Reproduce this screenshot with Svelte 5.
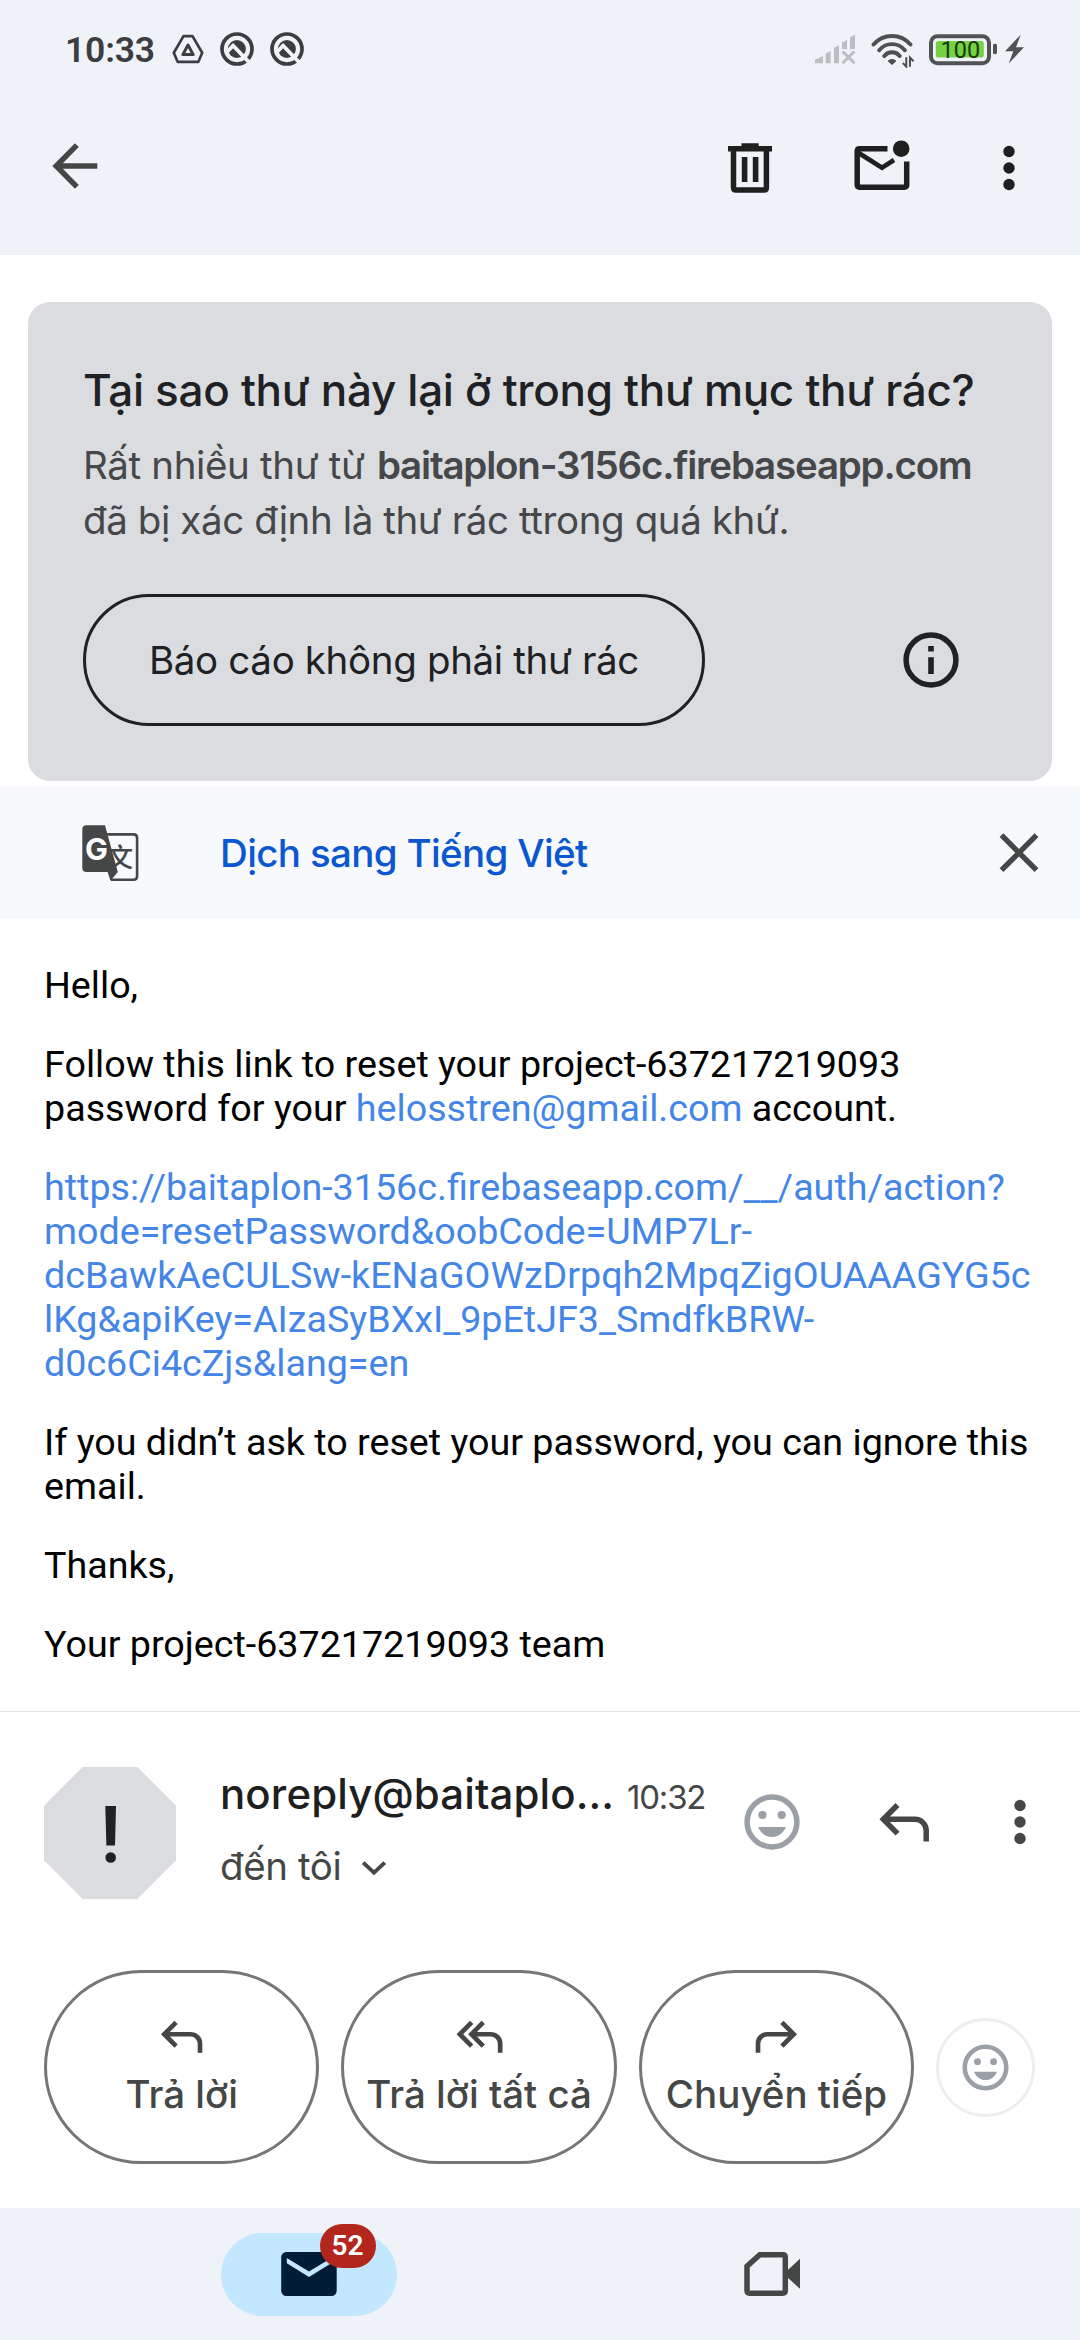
<script>
  const actions = [
    { icon: 'reply', label: 'Trả lời' },
    { icon: 'replyAll', label: 'Trả lời tất cả' },
    { icon: 'forward', label: 'Chuyển tiếp' },
  ];
  const unread = 52;
</script>

{#snippet reply(cls)}
  <svg class={cls} viewBox="0 0 66 66">
    <path class="line" d="M26.5 16 12.3 30.3 26.5 44.6M12.3 30.3H44A11.2 11.2 0 0 1 55.2 41.5V52.4" />
  </svg>
{/snippet}

{#snippet replyAll(cls)}
  <svg class={cls} viewBox="0 0 66 66">
    <path class="line" d="M23.6 16 9.4 30.3 23.6 44.6M37.5 16 23.3 30.3 37.5 44.6M23.3 30.3H46.6A11.2 11.2 0 0 1 57.8 41.5V52.4" />
  </svg>
{/snippet}

{#snippet forward(cls)}
  <svg class={cls} viewBox="0 0 66 66">
    <path class="line" d="M39.5 16 53.7 30.3 39.5 44.6M53.7 30.3H22A11.2 11.2 0 0 0 10.8 41.5V52.4" />
  </svg>
{/snippet}

{#snippet smile(cls)}
  <svg class={cls} viewBox="0 0 66 66">
    <circle class="ring" cx="33" cy="33" r="24.9" />
    <circle class="grey" cx="23.4" cy="26" r="4.1" />
    <circle class="grey" cx="42.7" cy="26" r="4.1" />
    <path class="grey" d="M19.2 38H46.8C44.5 44 39.3 48 33 48S21.5 44 19.2 38Z" />
  </svg>
{/snippet}

{#snippet more(cls)}
  <svg class={cls} viewBox="0 0 66 66">
    <circle cx="33" cy="16.5" r="5.7" />
    <circle cx="33" cy="33" r="5.7" />
    <circle cx="33" cy="49.5" r="5.7" />
  </svg>
{/snippet}

{#snippet notice()}
  <svg class="notice" viewBox="0 0 34 34">
    <circle cx="17" cy="17" r="15" fill="none" stroke="#3c3d40" stroke-width="3.7" />
    <circle cx="16.9" cy="17" r="9" fill="#3c3d40" />
    <path d="M6.5 20.5 13 13.8M11.8 12.3 30.4 31.6" fill="none" stroke="#eff3f8" stroke-width="3.8" />
  </svg>
{/snippet}

<div class="screen">
  <div class="status">
    <span class="clock">10:33</span>
    <svg class="drive" viewBox="0 0 32 32">
      <path d="M11.5 2.1H20.5L30.2 18.8 26.4 27.8H5.6L1.8 18.8Z" fill="none" stroke="#3c3d40" stroke-width="2.7" stroke-linejoin="round" />
      <path d="M16 11 21.2 20.6H10.8Z" fill="none" stroke="#3c3d40" stroke-width="3" stroke-linejoin="round" />
    </svg>
    {@render notice()}
    {@render notice()}
    <div class="spacer"></div>
    <svg class="signal" viewBox="0 0 40 32">
      <path d="M0 29.3V26L8 22V29.3ZM10.7 29.3V19.4L15.7 17V29.3ZM19 29.3V13.8L24 11.3V29.3ZM27 15V8.4L32 6V15ZM35 15V3.4L40 .6V15Z" fill="#bbbdc0" />
      <path d="M28.5 18.3 38.5 28.3M38.5 18.3 28.5 28.3" fill="none" stroke="#bbbdc0" stroke-width="3" stroke-linecap="round" />
    </svg>
    <svg class="wifi" viewBox="0 0 44 36">
      <path d="M2.5 12.5A24.4 24.4 0 0 1 39.5 12.5M8.2 18.3A16.3 16.3 0 0 1 33.8 18.3M13.3 24A9.9 9.9 0 0 1 28.7 24" fill="none" stroke="#4e4f51" stroke-width="3.9" stroke-linecap="round" />
      <path d="M18 29Q21 27.2 24 29L21 31.8Z" fill="#4e4f51" stroke="#4e4f51" stroke-width="2" stroke-linejoin="round" />
      <path d="M35.3 25.3V34.6L31.8 31M39 34.8V25.5L42.6 29.4" fill="none" stroke="#4e4f51" stroke-width="2" />
    </svg>
    <svg class="battery" viewBox="0 0 68 32">
      <rect x="2" y="2.2" width="58" height="27" rx="6.5" fill="none" stroke="#515254" stroke-width="4" />
      <rect x="6.8" y="7" width="48" height="16.6" rx="2.6" fill="#76d143" />
      <rect x="64" y="9.8" width="4" height="10.4" rx="1.6" fill="#515254" />
      <text x="31.4" y="24" text-anchor="middle">100</text>
    </svg>
    <svg class="bolt" viewBox="0 0 19 32">
      <path d="M15.7.7 0 17.3H8.3L3.7 29.6 19 13.2H11Z" fill="#515254" />
    </svg>
  </div>

  <header>
    <svg class="icon" viewBox="0 0 66 66">
      <path d="M34.9 10.1 14.2 31 34.9 51.9M14.2 31H55.3" fill="none" stroke="#444746" stroke-width="5.5" />
    </svg>
    <div class="tools">
      <svg class="icon" viewBox="0 0 66 66">
        <path d="M24.5 8.2H41.7V11H55V16.6H11V11H24.5ZM24.8 22H30.4V47H24.8ZM35.8 22H41.4V47H35.8Z" fill="#1f1f1f" />
        <path d="M16.5 14V52.4Q16.5 54.9 19 54.9H47Q49.4 54.9 49.4 52.4V14" fill="none" stroke="#1f1f1f" stroke-width="5.5" />
      </svg>
      <svg class="icon" viewBox="0 0 66 66">
        <path d="M38.5 13.8H10.6Q8.2 13.8 8.2 16.3V49.8Q8.2 52.2 10.6 52.2H55.3Q57.7 52.2 57.7 49.8V26.4" fill="none" stroke="#1f1f1f" stroke-width="5.5" />
        <path d="M9 17.5 33 32.7 45 25" fill="none" stroke="#1f1f1f" stroke-width="4.8" />
        <circle cx="52.2" cy="13.7" r="8.3" fill="#1f1f1f" />
      </svg>
      {@render more('icon dots')}
    </div>
  </header>

  <section class="card">
    <h1>Tại sao thư này lại ở trong thư mục thư rác?</h1>
    <p>Rất nhiều thư từ <b>baitaplon-3156c.firebaseapp.com</b><br /><span class="second">đã bị xác định là thư rác ttrong quá khứ.</span></p>
    <div class="cardrow">
      <button class="report">Báo cáo không phải thư rác</button>
      <svg class="icon" viewBox="0 0 66 66">
        <circle cx="33" cy="33" r="24.9" fill="none" stroke="#202124" stroke-width="5.5" />
        <path d="M30.2 19H35.8V24.6H30.2ZM30.2 30.2H35.8V47H30.2Z" fill="#202124" />
      </svg>
    </div>
  </section>

  <section class="translate">
    <svg class="icon" viewBox="0 0 66 66">
      <path d="M30 14.4H56.5Q60.1 14.4 60.1 18V56.2Q60.1 59.7 56.5 59.7H34" fill="none" stroke="#444746" stroke-width="2.6" />
      <text class="han" x="43" y="46.6" text-anchor="middle">文</text>
      <path d="M9.5 5.3H28L40.8 52 33.5 60.7 30.6 52H9.5Q5.3 52 5.3 47.8V9.5Q5.3 5.3 9.5 5.3Z" fill="#444746" />
      <text class="gee" x="19.4" y="39.6" text-anchor="middle">G</text>
    </svg>
    <span>Dịch sang Tiếng Việt</span>
    <svg class="icon close" viewBox="0 0 66 66">
      <path d="M15.5 15.2 50.5 50.2M50.5 15.2 15.5 50.2" fill="none" stroke="#444746" stroke-width="5.4" />
    </svg>
  </section>

  <article>
    <p>Hello,</p>
    <p>Follow this link to reset your project-637217219093<br />password for your <a href="#mail">helosstren@gmail.com</a> account.</p>
    <p>
      <a href="#reset">https://baitaplon-3156c.firebaseapp.com/__/auth/action?<br />mode=resetPassword&amp;oobCode=UMP7Lr-<br />dcBawkAeCULSw-kENaGOWzDrpqh2MpqZigOUAAAGYG5c<br />lKg&amp;apiKey=AIzaSyBXxI_9pEtJF3_SmdfkBRW-<br />d0c6Ci4cZjs&amp;lang=en</a>
    </p>
    <p>If you didn’t ask to reset your password, you can ignore this<br />email.</p>
    <p>Thanks,</p>
    <p>Your project-637217219093 team</p>
  </article>

  <section class="sender">
    <svg class="avatar" viewBox="0 0 132 132">
      <path d="M38.7 0H93.3L132 38.7V93.3L93.3 132H38.7L0 93.3V38.7Z" fill="#dadce0" />
      <path d="M61.3 39H72L71 78.6H62.4Z" fill="#202124" />
      <circle cx="66.7" cy="90.5" r="5.3" fill="#202124" />
    </svg>
    <div class="who">
      <div class="nameline"><span class="name">noreply@baitaplo...</span><span class="time">10:32</span></div>
      <div class="to">
        <span>đến tôi</span>
        <svg viewBox="0 0 26 18"><path d="M2.2 2.6 13 12.6 23.8 2.6" fill="none" stroke="#444746" stroke-width="4" /></svg>
      </div>
    </div>
    <div class="sendertools">
      {@render smile('icon')}
      {@render reply('icon arrow')}
      {@render more('icon dots soft')}
    </div>
  </section>

  <section class="actions">
    {#each actions as action}
      <button class="action">
        {#if action.icon === 'reply'}{@render reply('small arrow')}
        {:else if action.icon === 'replyAll'}{@render replyAll('small arrow')}
        {:else}{@render forward('small arrow')}{/if}
        <span>{action.label}</span>
      </button>
    {/each}
    <button class="react">{@render smile('small')}</button>
  </section>

  <nav>
    <div class="tab">
      <div class="pill">
        <svg class="icon" viewBox="0 0 66 66">
          <rect x="5.2" y="11" width="55.5" height="44" rx="5.2" fill="#001d35" />
          <path d="M10.8 16.9V22.2L33 36 55.2 22.2V16.9L33 30.4Z" fill="#c2e7ff" />
        </svg>
        <span class="badge">{unread}</span>
      </div>
    </div>
    <div class="tab">
      <svg class="icon" viewBox="0 0 66 66">
        <path d="M20.8 13.8H43.7Q46.3 13.8 46.3 16.4V49.6Q46.3 52.2 43.7 52.2H10.6Q8 52.2 8 49.6V25.3Z" fill="none" stroke="#444746" stroke-width="5.5" />
        <path d="M61 17.8V47.8L48.5 36.5V29.2Z" fill="#444746" />
      </svg>
    </div>
  </nav>
</div>

<style>
  :global(body) { margin: 0; background: #fff; }
  .screen {
    width: 1080px;
    height: 2340px;
    overflow: hidden;
    background: #fff;
    font-family: Inter, Roboto, sans-serif;
    display: flex;
    flex-direction: column;
  }
  svg { display: block; flex: none; }
  p, h1 { margin: 0; }
  button { font: inherit; background: none; padding: 0; margin: 0; box-sizing: border-box; }
  .icon { width: 66px; height: 66px; }
  .small { width: 55px; height: 55px; }
  .line { fill: none; stroke: #444746; stroke-width: 5.5; }
  .small .line { stroke-width: 5.6; }
  .ring { fill: none; stroke: #9aa0a6; stroke-width: 5.5; }
  .grey { fill: #9aa0a6; }
  .dots { fill: #1f1f1f; }
  .soft { fill: #444746; }

  .status {
    height: 100px;
    display: flex;
    align-items: center;
    padding: 0 56px 0 65px;
    box-sizing: border-box;
    background: #eff3f8;
  }
  .clock { width: 107px; font: 600 35.5px/42px Roboto, sans-serif; letter-spacing: -0.2px; color: #3c3d40; }
  .drive { width: 32px; height: 32px; }
  .notice { width: 34px; height: 34px; margin: 0 0 2px 16px; }
  .spacer { flex: 1; }
  .signal { width: 40px; height: 32px; }
  .wifi { width: 44px; height: 36px; margin-left: 16px; }
  .battery { width: 68px; height: 32px; margin-left: 14px; }
  .battery text { font: 400 23.5px Roboto, sans-serif; fill: #173808; }
  .bolt { width: 19px; height: 32px; margin-left: 8px; }

  header {
    height: 155px;
    box-sizing: border-box;
    padding: 35px 38px 0 42px;
    background: #eff3f8;
    display: flex;
    justify-content: space-between;
  }
  .tools { display: flex; gap: 66px; }
  .tools > :global(:last-child) { margin-left: -5px; }

  .card {
    margin: 47px 28px 6px;
    height: 479px;
    box-sizing: border-box;
    padding: 60px 55px 0;
    border-radius: 22px;
    background: #dadce0;
    white-space: nowrap;
  }
  h1 { font-size: 44px; line-height: 56px; font-weight: 500; letter-spacing: -0.3px; color: #202124; }
  .card p { margin-top: 20px; font-size: 38.5px; line-height: 55px; color: #46474a; letter-spacing: -0.35px; }
  .card b { font-weight: 600; letter-spacing: -1.2px; margin-left: 2px; }
  .second { letter-spacing: -0.4px; }
  .cardrow { display: flex; align-items: center; margin-top: 46px; gap: 193px; }
  .report {
    width: 622px;
    height: 132px;
    border: 3px solid #202124;
    border-radius: 66px;
    font-size: 38.5px;
    letter-spacing: -0.35px;
    color: #202124;
  }

  .translate {
    height: 132px;
    box-sizing: border-box;
    padding: 0 28px 0 77px;
    background: #f7f9fd;
    display: flex;
    align-items: center;
  }
  .translate span { margin-left: 77px; font-size: 38.5px; font-weight: 500; letter-spacing: -0.65px; color: #0b57d0; }
  .close { margin-left: auto; }
  .han { font: 500 26px "Noto Sans CJK SC", sans-serif; fill: #444746; }
  .gee { font: 700 30.5px Inter, sans-serif; fill: #fff; }

  article {
    padding: 44.5px 0 45px 44px;
    font: 37.67px/44px Roboto, sans-serif;
    color: #000;
    white-space: nowrap;
    display: flex;
    flex-direction: column;
    gap: 35px;
    border-bottom: 1px solid #e1e3e1;
  }
  article a { color: #4485e8; text-decoration: none; }

  .sender { display: flex; padding: 55px 27px 0 44px; height: 132px; }
  .avatar { width: 132px; height: 132px; }
  .who { width: 519px; margin-left: 44px; padding-top: 2px; white-space: nowrap; }
  .nameline { display: flex; align-items: baseline; line-height: 50px; }
  .name { width: 407px; font-size: 42px; font-weight: 500; letter-spacing: 0.1px; color: #1f1f1f; }
  .time { font-size: 33px; letter-spacing: -1.2px; color: #444746; }
  .to { display: flex; align-items: center; margin-top: 19px; line-height: 50px; font-size: 38.5px; letter-spacing: -0.4px; color: #444746; }
  .to svg { width: 26px; height: 18px; margin-left: 20px; margin-top: 5px; }
  .sendertools { display: flex; padding-top: 22px; }
  .sendertools > :global(:nth-child(2)) { margin-left: 66px; }
  .sendertools > :global(:nth-child(3)) { margin-left: 50px; }

  .actions { display: flex; align-items: center; gap: 22px; padding: 71px 44px 44px; }
  .action {
    width: 275.4px;
    height: 194px;
    flex: none;
    border: 3px solid #747775;
    border-radius: 97px;
    display: flex;
    flex-direction: column;
    align-items: center;
    justify-content: flex-start;
    padding-top: 36px;
    font-size: 38.5px;
    font-weight: 500;
    line-height: 46px;
    color: #444746;
    white-space: nowrap;
  }
  .action span { margin-top: 7px; }
  .react {
    width: 99px;
    height: 99px;
    flex: none;
    border: 3px solid #eeeeee;
    border-radius: 50%;
    display: flex;
    align-items: center;
    justify-content: center;
  }

  nav { height: 132px; flex: none; background: #eff3f8; display: flex; padding: 0 77px; }
  .tab { flex: 1; display: flex; align-items: center; justify-content: center; }
  .pill {
    position: relative;
    width: 176px;
    height: 83px;
    border-radius: 42px;
    background: #c2e7ff;
    display: flex;
    align-items: center;
    justify-content: center;
  }
  .badge {
    position: absolute;
    left: 99px;
    top: -9px;
    width: 56px;
    height: 44px;
    border-radius: 22px;
    background: #b3261e;
    color: #fff;
    font: 600 28px/44px Roboto, sans-serif;
    text-align: center;
  }
</style>
